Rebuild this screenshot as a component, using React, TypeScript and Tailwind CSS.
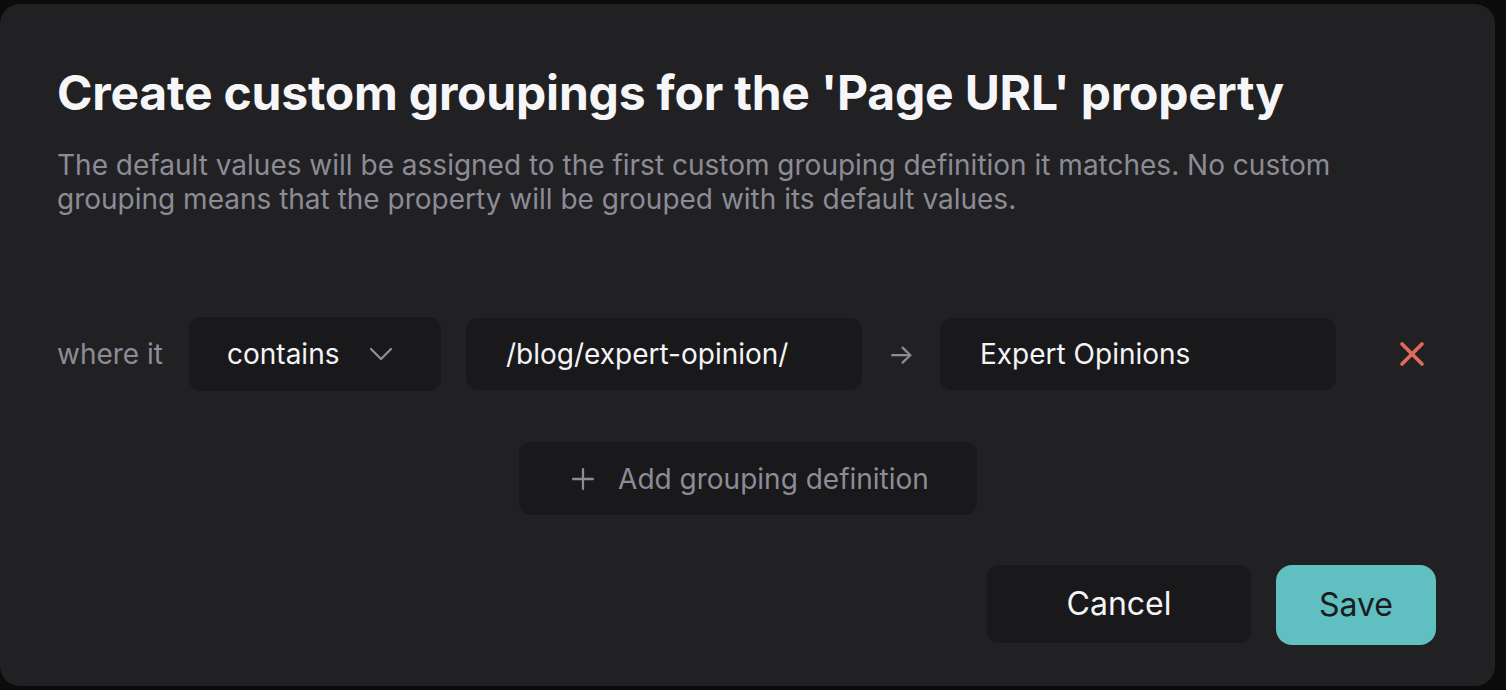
import { ChevronDown, Plus, X } from "lucide-react";

export default function App() {
  return (
    <div className="h-[690px] w-[1506px] bg-[#0b0b0c] pb-[4px] pr-[11px] pt-[4px] font-['Inter',sans-serif]">
      <div className="flex h-[682px] w-[1495px] flex-col rounded-[20px] bg-[#212124] px-[57px] pt-[60px]">
        <h1 className="text-[48px] font-bold leading-[58px] tracking-[-0.2px] text-[#f6f6f8]">
          Create custom groupings for the 'Page URL' property
        </h1>
        <p className="mt-[26px] max-w-[1300px] text-[28px] leading-[34px] text-[#8c8c96]">
          The default values will be assigned to the first custom grouping definition it matches. No custom grouping means that the property will be grouped with its default values.
        </p>

        <div className="mt-[101px] flex items-center">
          <span className="w-[132px] text-[28px] text-[#8c8c96]">where it</span>
          <button
            type="button"
            className="flex h-[74px] w-[252px] items-center justify-between rounded-[12px] bg-[#19191b] pl-[38px] pr-[40px] text-[28px] text-[#f4f4f6]"
          >
            contains
            <ChevronDown className="h-[40px] w-[40px] text-[#8c8c96]" strokeWidth={1.4} />
          </button>
          <div className="ml-[25px] flex h-[72px] w-[396px] items-center rounded-[12px] bg-[#19191b] px-[40px] text-[28px] text-[#f4f4f6]">
            /blog/expert-opinion/
          </div>
          <span className="w-[78px] text-center text-[28px] text-[#8c8c96]">→</span>
          <div className="flex h-[72px] w-[396px] items-center rounded-[12px] bg-[#19191b] px-[40px] text-[28px] text-[#f4f4f6]">
            Expert Opinions
          </div>
          <X className="ml-[56px] h-[40px] w-[40px] text-[#e06a5c]" strokeWidth={2.2} />
        </div>

        <div className="mt-[51px] flex justify-center">
          <button
            type="button"
            className="flex h-[73px] w-[458px] items-center justify-center gap-[18px] rounded-[12px] bg-[#19191b] text-[28px] text-[#8c8c96]"
          >
            <Plus className="h-[34px] w-[34px]" strokeWidth={1.6} />
            Add grouping definition
          </button>
        </div>

        <div className="mt-[50px] flex items-start justify-end gap-[25px] pr-[2px]">
          <button
            type="button"
            className="h-[78px] w-[264px] rounded-[12px] bg-[#19191b] text-[32px] text-[#f4f4f6]"
          >
            Cancel
          </button>
          <button
            type="button"
            className="h-[80px] w-[160px] rounded-[16px] bg-[#5fbfc1] text-[32px] text-[#1b1b1d]"
          >
            Save
          </button>
        </div>
      </div>
    </div>
  );
}
